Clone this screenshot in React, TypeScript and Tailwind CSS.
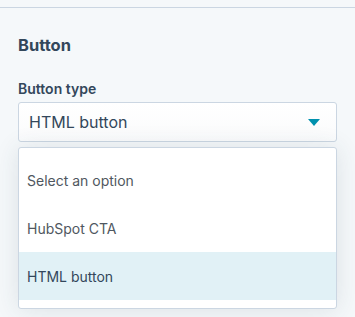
import React from "react";

export default function App() {
  return (
    <div className="w-[355px] h-[317px] bg-[#f5f8fa] overflow-hidden" style={{ fontFamily: "Inter, 'Noto Sans', sans-serif" }}>
      <div className="h-[7px]" />
      <div className="border-t border-[#cbd6e2] px-[18px]">
        <div className="pt-[25px] text-[16.5px] leading-[24px] font-bold text-[#33475b]">Button</div>
        <div className="pt-[22px] text-[14px] leading-[20px] font-semibold text-[#33475b]">Button type</div>
        <div className="mt-[3px] h-[40px] rounded-[3px] border border-[#cbd6e2] bg-gradient-to-b from-white to-[#fafbfc] flex items-center justify-between pl-[10px] pr-[16px]">
          <span className="text-[16px] text-[#33475b]">HTML button</span>
          <svg width="12" height="7" viewBox="0 0 12 7">
            <path d="M0 0 L12 0 L6 7 Z" fill="#0091ae" />
          </svg>
        </div>
        <div className="mt-[5px] rounded-[3px] border border-[#cbd6e2] bg-white py-[8px] shadow-[0_1px_24px_0_rgba(45,62,80,0.12)]">
          <div className="h-[48px] flex items-center px-[8px] text-[14px] text-[#4f5760]">Select an option</div>
          <div className="h-[48px] flex items-center px-[8px] text-[14px] text-[#4f5760]">HubSpot CTA</div>
          <div className="h-[48px] flex items-center px-[8px] text-[14px] text-[#33475b] bg-[#e1f1f6]">HTML button</div>
        </div>
      </div>
    </div>
  );
}
